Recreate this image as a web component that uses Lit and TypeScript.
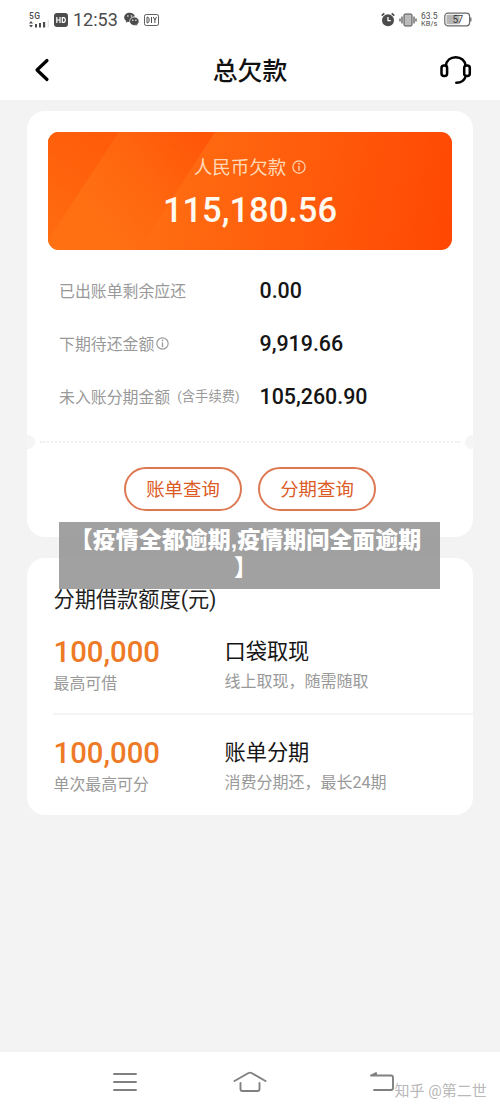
import { LitElement, html, css, svg, nothing } from "lit";
import { customElement } from "lit/decorators.js";

const info = (cls: string) => html`<svg class=${cls} viewBox="0 0 14 14" fill="none" stroke="currentColor">
  ${svg`<circle cx="7" cy="7" r="6.1" stroke-width="1.2"/><path d="M7 5.800v5" stroke-width="1.400"/><circle cx="7" cy="3.700" r=".9" fill="currentColor" stroke="none"/>`}
</svg>`;

const bills = [
  { label: "已出账单剩余应还", value: "0.00", tip: false, note: "" },
  { label: "下期待还金额", value: "9,919.66", tip: true, note: "" },
  { label: "未入账分期金额", value: "105,260.90", tip: false, note: "(含手续费)" },
];

const quotas = [
  { amount: "100,000", caption: "最高可借", title: "口袋取现", text: "线上取现，随需随取" },
  { amount: "100,000", caption: "单次最高可分", title: "账单分期", text: "消费分期还，最长24期" },
];

@customElement("status-bar")
class StatusBar extends LitElement {
  static styles = css`
    :host { display: flex; justify-content: space-between; height: 40px; padding: 0 28px 0 29px; box-sizing: border-box; color: #4c4c4c; }
    .side { display: flex; align-items: center; height: 39px; }
    .signal { width: 21px; height: 18px; margin-right: 4px; }
    .hd { width: 14px; height: 14px; margin-right: 5px; }
    .time { font-size: 18px; line-height: 20px; letter-spacing: 0; width: 51px; white-space: nowrap; }
    .wechat { width: 15px; height: 15px; }
    .diy { width: 15px; height: 12px; margin-left: 5px; }
    .alarm { width: 14px; height: 15px; }
    .vibrate { width: 18px; height: 14px; margin-left: 4px; }
    .speed { display: flex; flex-direction: column; font-size: 8.500px; line-height: 8px; margin-left: 4px; width: 19px; white-space: nowrap; }
    .speed .unit { font-size: 7.500px; }
    .battery { width: 28px; height: 15px; margin-left: 4px; }
    text { font-family: Roboto, "Liberation Sans", sans-serif; }
  `;
  render() {
    return html`
      <div class="side">
        <svg class="signal" viewBox="0 0 21 18" fill="currentColor">
          <text x="0" y="7.600" font-size="8.500" font-weight="500" textLength="11">5G</text>
          <path d="M0 12.500l2-2.500 2 2.500zM0 14l2 2.500 2-2.500z" />
          <path d="M6 13h2v3.500H6zM10 12h2v4.500h-2zM14 11h2.200v5.500H14z" />
          <path d="M18.500 9h1.500v7.500h-1.500z" opacity=".15" />
        </svg>
        <svg class="hd" viewBox="0 0 14 14"><rect width="14" height="14" rx="3" fill="#4c4c4c" />
          <path d="M2.800 4v6M6 4v6M2.800 7H6M8.300 4.600h1.400c1 0 1.600.700 1.600 2.400s-.6 2.400-1.600 2.400H8.300z" stroke="#fff" stroke-width="1.200" fill="none" />
        </svg>
        <span class="time">12:53</span>
        <svg class="wechat" viewBox="0 0 15 15" fill="#4c4c4c">
          <path d="M5.700.7C2.600.7.2 2.800.2 5.400c0 1.500.8 2.700 2 3.600l-.5 1.800 2-1c.7.2 1.400.3 2.200.3C5.400 6.700 7.600 4.500 11 4.500 10.500 2.200 8.300.7 5.700.7z" />
          <path d="M10.300 5.100c2.600 0 4.700 1.800 4.700 4.200 0 1.300-.7 2.400-1.700 3.100l.4 1.600-1.700-.8c-.5.2-1.100.3-1.700.3-2.600 0-4.700-1.900-4.700-4.200s2.100-4.200 4.700-4.200z" stroke="#fff" stroke-width=".6" />
          <g fill="#fff"><circle cx="3.900" cy="4" r=".8" /><circle cx="7.500" cy="4" r=".8" /><circle cx="8.800" cy="8.200" r=".7" /><circle cx="11.900" cy="8.200" r=".7" /></g>
        </svg>
        <svg class="diy" viewBox="0 0 15 12" fill="none" stroke="#4c4c4c">
          <rect x=".5" y=".5" width="14" height="11" rx="1.800" stroke-width=".9" />
          <path d="M3 3.200v5.600h1c1.500 0 1.500-5.600 0-5.600zM7.500 3v6M9.300 3l1.600 3v3M12.500 3l-1.600 3" stroke-width="1" />
        </svg>
      </div>
      <div class="side">
        <svg class="alarm" viewBox="0 0 14 15"><circle cx="7" cy="8.200" r="6" fill="#4c4c4c" />
          <path d="M.7 3.700L3.300 1.300M13.300 3.700L10.700 1.300" stroke="#4c4c4c" stroke-width="1.700" />
          <path d="M7 5v3.700h2.800" stroke="#fff" stroke-width="1.300" fill="none" />
        </svg>
        <svg class="vibrate" viewBox="0 0 18 14" stroke="#4c4c4c" fill="none">
          <rect x="5" y="1" width="8" height="12" rx="1.200" fill="#bbb" />
          <path d="M3 3.500v7M15 3.500v7M1 5.500v3M17 5.500v3" stroke-width="1.200" />
        </svg>
        <span class="speed"><span>63.5</span><span class="unit">KB/s</span></span>
        <svg class="battery" viewBox="0 0 28 15">
          <rect x=".8" y="1.200" width="24.800" height="12.600" rx="3" fill="#fff" stroke="#686868" stroke-width="1.200" />
          <path d="M3.500 2.800h12v9.400h-12q-1 0-1-1v-7.400q0-1 1-1z" fill="#b5b5b5" />
          <path d="M26.800 5.500v4" stroke="#686868" stroke-width="1.300" />
          <text x="8.500" y="11.300" font-size="10" fill="#3c3c3c" textLength="10.500">57</text>
        </svg>
      </div>`;
  }
}

@customElement("page-header")
class PageHeader extends LitElement {
  static styles = css`
    :host { display: grid; grid-template-columns: 40px 1fr 40px; align-items: center; height: 60px; padding: 0 26px; box-sizing: border-box; }
    .back { width: 16px; height: 24px; margin-left: 8px; }
    .title { text-align: center; font-size: 24.800px; line-height: 34px; font-weight: 500; color: #111; margin: 0; padding-top: 4px; }
    .help { width: 32px; height: 30px; margin-left: 6px; margin-top: -1px; }
  `;
  render() {
    return html`
      <svg class="back" viewBox="0 0 16 24" fill="none" stroke="#000" stroke-width="3.200" stroke-linecap="round" stroke-linejoin="round"><path d="M13 2.500L3 12l10 9.500" /></svg>
      <h1 class="title">总欠款</h1>
      <svg class="help" viewBox="0 0 32 30" fill="none" stroke="#000" stroke-width="2.500" stroke-linecap="round">
        <rect x="1.500" y="10.500" width="5.600" height="10.500" rx="2.500" />
        <rect x="24.200" y="10.500" width="5.600" height="10.500" rx="2.500" />
        <path d="M6 10.500C6.500 5.500 10.500 2.200 15.800 2.200s9.300 3.300 9.700 8.300" />
        <path d="M25.800 21c-1.200 4-4.500 6.800-9.500 6.800" />
      </svg>`;
  }
}

@customElement("debt-card")
class DebtCard extends LitElement {
  static styles = css`
    :host { display: flex; flex-direction: column; box-sizing: border-box; height: 426px; padding-top: 21px; border-radius: 18px; background: #fff; overflow: hidden; }
    .banner { margin: 0 21px; width: 404px; height: 118px; border-radius: 11px; overflow: hidden; display: grid; }
    .shade, .sum { grid-area: 1 / 1; }
    .shade { width: 404px; height: 118px; }
    .sum { display: flex; flex-direction: column; align-items: center; padding-top: 23px; z-index: 1; }
    .name { display: flex; align-items: center; gap: 6px; font-size: 18.500px; line-height: 26px; color: #ffd9b8; }
    .name .tip { margin-top: -2px; }
    .tip { width: 14px; height: 14px; }
    .total { font-size: 34.500px; line-height: 40px; margin-top: 9px; font-weight: 500; color: #fffaf0; white-space: nowrap; }
    .rows { display: flex; flex-direction: column; padding: 14px 0 0 32px; }
    .row { display: grid; grid-template-columns: 200.500px 1fr; align-items: center; height: 53px; }
    .label { display: flex; align-items: center; font-size: 15.900px; color: #999; white-space: nowrap; padding-bottom: 1px; }
    .label .tip { width: 13px; height: 13px; margin-left: 2px; }
    .note { font-size: 13.300px; margin-left: 7px; margin-top: -1px; }
    .value { font-size: 21.400px; font-weight: 500; color: #151515; padding-bottom: 1px; }
    .tear { display: flex; align-items: center; justify-content: space-between; height: 14px; margin-top: 12px; }
    .notch { width: 8px; height: 14px; background: #f5f5f5; }
    .notch.left { border-radius: 0 7px 7px 0; }
    .notch.right { border-radius: 7px 0 0 7px; }
    .line { flex: 1; margin: 0 5px; border-top: 2px dotted #efefef; }
    .actions { display: flex; justify-content: center; gap: 16px; margin-top: 18px; }
    .action { width: 118px; height: 44px; padding: 2px 0 0; border: 2px solid #dd7853; border-radius: 22px; background: none; color: #dc5a25; font: inherit; font-size: 18.400px; line-height: 38px; }
  `;
  render() {
    return html`
      <div class="banner">
        <svg class="shade" viewBox="0 0 404 118">
          <defs>
            <linearGradient id="base" gradientUnits="userSpaceOnUse" x1="120" y1="40" x2="404" y2="90"><stop offset="0" stop-color="#ff6c11" /><stop offset=".5" stop-color="#ff5b0b" /><stop offset="1" stop-color="#ff4803" /></linearGradient>
            <linearGradient id="fold" gradientUnits="userSpaceOnUse" x1="168" y1="0" x2="50" y2="90"><stop offset="0" stop-color="#ff5306" /><stop offset=".55" stop-color="#ff650e" /><stop offset="1" stop-color="#ff7013" /></linearGradient>
            <linearGradient id="edge" gradientUnits="userSpaceOnUse" x1="70" y1="0" x2="0" y2="100"><stop offset="0" stop-color="#ff5a08" /><stop offset="1" stop-color="#ff6b10" /></linearGradient>
          </defs>
          <rect width="404" height="118" fill="url(#base)" />
          <path d="M0 0H167L91 118H0z" fill="url(#fold)" />
          <path d="M0 0H71L0 108z" fill="url(#edge)" />
        </svg>
        <div class="sum">
          <div class="name">人民币欠款${info("tip")}</div>
          <div class="total">115,180.56</div>
        </div>
      </div>
      <div class="rows">
        ${bills.map((b) => html`<div class="row">
          <div class="label">${b.label}${b.tip ? info("tip") : nothing}${b.note ? html`<span class="note">${b.note}</span>` : nothing}</div>
          <div class="value">${b.value}</div>
        </div>`)}
      </div>
      <div class="tear"><span class="notch left"></span><span class="line"></span><span class="notch right"></span></div>
      <div class="actions"><button class="action">账单查询</button><button class="action">分期查询</button></div>`;
  }
}

@customElement("quota-card")
class QuotaCard extends LitElement {
  static styles = css`
    :host { display: block; box-sizing: border-box; height: 257px; padding: 28px 0 0 26px; border-radius: 18px; background: #fff; }
    .heading { margin: 0 0 0 .500px; font-size: 21.200px; line-height: 28px; font-weight: 400; color: #222; }
    .item { display: grid; grid-template-columns: 171px 1fr; height: 99px; box-sizing: border-box; padding: 21px 0 0 .500px; }
    .item + .item { border-top: 2px solid #f4f4f4; height: 101px; }
    .amount { font-size: 29.300px; line-height: 34px; font-weight: 500; color: #ee7a27; }
    .caption { font-size: 15.900px; line-height: 22px; margin-top: 4px; color: #999; }
    .title { font-size: 21.200px; line-height: 30px; margin-top: 2px; color: #151515; }
    .text { font-size: 16px; line-height: 22px; margin-top: 4px; color: #999; white-space: nowrap; }
  `;
  render() {
    return html`
      <h2 class="heading">分期借款额度(元)</h2>
      ${quotas.map((q) => html`<div class="item">
        <div><div class="amount">${q.amount}</div><div class="caption">${q.caption}</div></div>
        <div><div class="title">${q.title}</div><div class="text">${q.text}</div></div>
      </div>`)}`;
  }
}

@customElement("nav-bar")
class NavBar extends LitElement {
  static styles = css`
    :host { display: grid; grid-template-columns: 125px 125px 1fr; align-items: center; height: 59px; padding-left: 62.500px; box-sizing: border-box; background: #fff; }
    .icon { justify-self: center; width: 34px; height: 24px; fill: none; stroke: #808080; stroke-width: 1.900; stroke-linecap: round; stroke-linejoin: round; }
    .end { display: flex; align-items: center; padding-left: 53px; }
    .credit { font-size: 15px; line-height: 20px; color: #b8b8b8; white-space: nowrap; margin: 18px 0 0 -5px; }
  `;
  render() {
    return html`
      <svg class="icon" viewBox="0 0 34 24"><path d="M6 4h22M6 12h22M6 20h22" /></svg>
      <svg class="icon" viewBox="0 0 34 24"><path d="M1.500 11L15.500 3q1.500-.8 3 0l14 8M7.500 13v6q0 2 2 2h15q2 0 2-2v-6" /></svg>
      <div class="end">
        <svg class="icon" viewBox="0 0 34 24"><path d="M5 5.500h20q2 0 2 2V18q0 2-2 2H8M10 3L5 5.500h5z" /></svg>
        <span class="credit">知乎 @第二世</span>
      </div>`;
  }
}

@customElement("app-root")
class AppRoot extends LitElement {
  static styles = css`
    :host { display: flex; flex-direction: column; position: relative; width: 500px; height: 1111px; overflow: hidden; background: #fff; font-family: Roboto, "Noto Sans CJK SC", sans-serif; }
    .content { flex: 1; display: flex; flex-direction: column; gap: 21px; padding: 11px 27px 0; background: #f3f3f3; }
    .caption { position: absolute; left: 59px; top: 522px; width: 381px; height: 67px; box-sizing: border-box; padding: 4px 8px 0 0; background: rgba(145, 145, 145, 0.86); color: #fff; font: 900 23px/28px "Liberation Sans", "Noto Sans CJK SC", sans-serif; text-align: center; white-space: nowrap; }
  `;
  render() {
    return html`
      <status-bar></status-bar>
      <page-header></page-header>
      <main class="content"><debt-card></debt-card><quota-card></quota-card></main>
      <nav-bar></nav-bar>
      <div class="caption">【疫情全都逾期,疫情期间全面逾期<br />】</div>`;
  }
}
